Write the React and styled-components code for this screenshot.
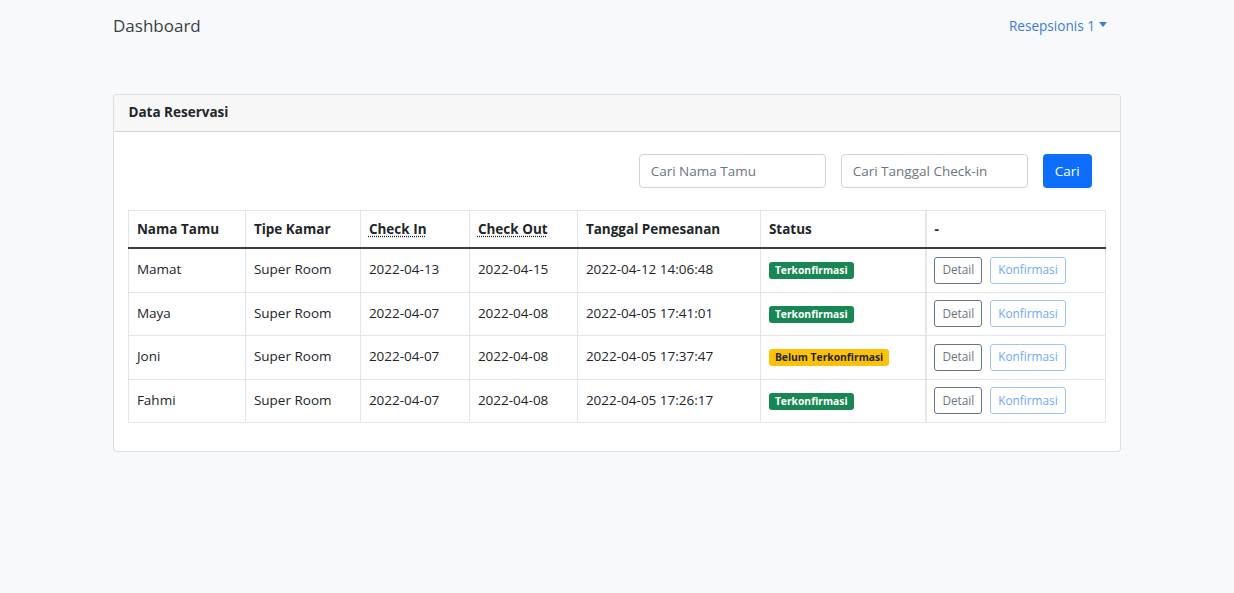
import styled, { createGlobalStyle } from "styled-components";

const GlobalStyle = createGlobalStyle`
  body {
    margin: 0;
    background: #f8f9fa;
    font-family: "Open Sans", "Noto Sans", sans-serif;
    font-size: 14px;
    color: #212529;
  }
`;

const Page = styled.div`
  width: 1008px;
  margin: 0 auto;
`;

const Navbar = styled.nav`
  display: flex;
  justify-content: space-between;
  align-items: center;
  height: 51px;
  padding: 0 14px 0 0;
`;

const Brand = styled.div`
  font-size: 17px;
  color: #3a3f44;
`;

const UserMenu = styled.div`
  display: flex;
  align-items: center;
  gap: 4px;
  font-size: 13.6px;
  color: #3c7bdc;
  &::after {
    content: "";
    border-top: 5px solid #3c7bdc;
    border-left: 4.5px solid transparent;
    border-right: 4.5px solid transparent;
    margin-top: -3px;
  }
`;

const Card = styled.section`
  margin-top: 43px;
  background: #fff;
  border: 1px solid rgba(0, 0, 0, 0.125);
  border-radius: 4px;
`;

const CardHeader = styled.div`
  background: #f7f7f7;
  border-bottom: 1px solid rgba(0, 0, 0, 0.125);
  padding: 7px 14.4px;
  font-weight: 700;
  font-size: 13.5px;
  line-height: 21.6px;
  border-radius: 4px 4px 0 0;
`;

const CardBody = styled.div`
  padding: 22px 14.4px 28px;
`;

const SearchForm = styled.form`
  display: flex;
  justify-content: flex-end;
  gap: 15px;
  padding-right: 14px;
  margin-bottom: 22px;
`;

const Input = styled.input`
  width: 187px;
  height: 34px;
  box-sizing: border-box;
  padding: 5px 11px;
  border: 1px solid #ced4da;
  border-radius: 4px;
  font: inherit;
  font-size: 13.5px;
  color: #212529;
  &::placeholder {
    color: #6c757d;
  }
`;

const SubmitButton = styled.button`
  height: 34px;
  padding: 0 12px;
  border: none;
  border-radius: 4px;
  background: #0d6efd;
  color: #fff;
  font: inherit;
  font-size: 13.5px;
`;

const Table = styled.table`
  width: 100%;
  border-collapse: collapse;
  font-size: 13.5px;
  th,
  td {
    border: 1px solid #e3e6e9;
    padding: 7.5px 7.5px 8px;
    text-align: left;
    vertical-align: middle;
    line-height: 21.6px;
  }
  th {
    font-weight: 700;
    border-bottom: 2px solid #3a3d40;
    padding-top: 8px;
    padding-bottom: 7px;
  }
  tbody td {
    height: 27px;
  }
  th:last-child,
  td:last-child {
    border-left: 2px solid #e6e6e6;
  }
`;

const Abbr = styled.abbr`
  text-decoration: underline dotted;
  text-underline-offset: 2px;
  cursor: help;
`;

const Badge = styled.span`
  display: inline-block;
  padding: 2px 6px;
  border-radius: 3px;
  font-size: 10.3px;
  font-weight: 700;
  line-height: 13px;
  background: ${(p) => (p.$warning ? "#ffc107" : "#198754")};
  color: ${(p) => (p.$warning ? "#212529" : "#fff")};
`;

const Actions = styled.div`
  display: flex;
  gap: 8px;
`;

const SmallButton = styled.button`
  height: 27px;
  padding: 0 7px;
  background: #fff;
  border-radius: 3px;
  font: inherit;
  font-size: 11.8px;
  border: 1px solid ${(p) => (p.$disabled ? "#9ec5fe" : "#6c757d")};
  color: ${(p) => (p.$disabled ? "#6ea8fe" : "#6c757d")};
`;

const rows = [
  { name: "Mamat", room: "Super Room", in: "2022-04-13", out: "2022-04-15", at: "2022-04-12 14:06:48", ok: true },
  { name: "Maya", room: "Super Room", in: "2022-04-07", out: "2022-04-08", at: "2022-04-05 17:41:01", ok: true },
  { name: "Joni", room: "Super Room", in: "2022-04-07", out: "2022-04-08", at: "2022-04-05 17:37:47", ok: false },
  { name: "Fahmi", room: "Super Room", in: "2022-04-07", out: "2022-04-08", at: "2022-04-05 17:26:17", ok: true },
];

export default function App() {
  return (
    <>
      <GlobalStyle />
      <Page>
        <Navbar>
          <Brand>Dashboard</Brand>
          <UserMenu>Resepsionis 1</UserMenu>
        </Navbar>
        <Card>
          <CardHeader>Data Reservasi</CardHeader>
          <CardBody>
            <SearchForm onSubmit={(e) => e.preventDefault()}>
              <Input placeholder="Cari Nama Tamu" />
              <Input placeholder="Cari Tanggal Check-in" />
              <SubmitButton>Cari</SubmitButton>
            </SearchForm>
            <Table>
              <colgroup>
                <col style={{ width: 117 }} />
                <col style={{ width: 115 }} />
                <col style={{ width: 109 }} />
                <col style={{ width: 108 }} />
                <col style={{ width: 183 }} />
                <col style={{ width: 165 }} />
                <col />
              </colgroup>
              <thead>
                <tr>
                  <th>Nama Tamu</th>
                  <th>Tipe Kamar</th>
                  <th><Abbr title="Check In">Check In</Abbr></th>
                  <th><Abbr title="Check Out">Check Out</Abbr></th>
                  <th>Tanggal Pemesanan</th>
                  <th>Status</th>
                  <th>-</th>
                </tr>
              </thead>
              <tbody>
                {rows.map((r) => (
                  <tr key={r.name}>
                    <td>{r.name}</td>
                    <td>{r.room}</td>
                    <td>{r.in}</td>
                    <td>{r.out}</td>
                    <td>{r.at}</td>
                    <td>
                      {r.ok ? (
                        <Badge>Terkonfirmasi</Badge>
                      ) : (
                        <Badge $warning>Belum Terkonfirmasi</Badge>
                      )}
                    </td>
                    <td>
                      <Actions>
                        <SmallButton>Detail</SmallButton>
                        <SmallButton $disabled>Konfirmasi</SmallButton>
                      </Actions>
                    </td>
                  </tr>
                ))}
              </tbody>
            </Table>
          </CardBody>
        </Card>
      </Page>
    </>
  );
}
